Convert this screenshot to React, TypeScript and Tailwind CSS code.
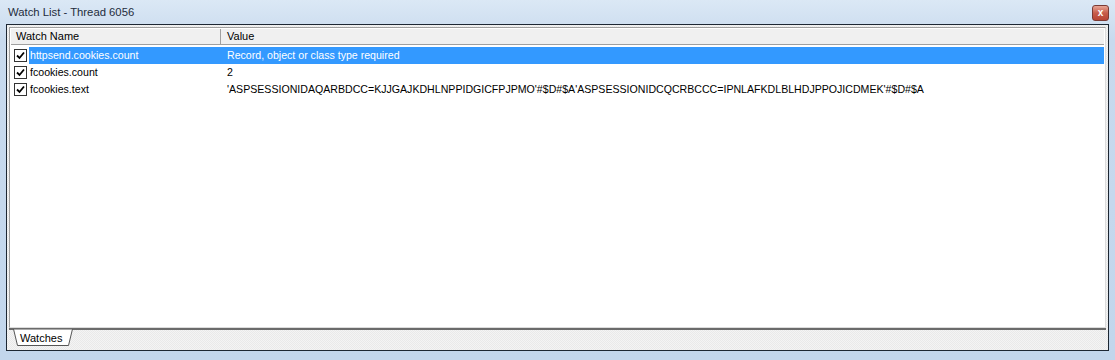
import React from "react";

const rows = [
  { name: "httpsend.cookies.count", value: "Record, object or class type required", selected: true },
  { name: "fcookies.count", value: "2", selected: false },
  {
    name: "fcookies.text",
    value:
      "'ASPSESSIONIDAQARBDCC=KJJGAJKDHLNPPIDGICFPJPMO'#$D#$A'ASPSESSIONIDCQCRBCCC=IPNLAFKDLBLHDJPPOJICDMEK'#$D#$A",
    selected: false,
  },
];

function CheckBox() {
  return (
    <div className="w-[13px] h-[13px] border border-[#333] bg-white flex items-center justify-center shrink-0">
      <svg width="9" height="9" viewBox="0 0 9 9">
        <path d="M1 4.5 L3.5 7 L8 1.5" fill="none" stroke="#000" strokeWidth="1.8" />
      </svg>
    </div>
  );
}

export default function App() {
  return (
    <div
      className="w-[1115px] h-[360px] flex flex-col bg-[linear-gradient(to_bottom,#dbe8f5,#c8daee_40px,#c2d6ec)] overflow-hidden"
      style={{ fontFamily: '"Liberation Sans", Arial, sans-serif' }}
    >
      {/* title bar */}
      <div className="h-[24px] flex items-center justify-between pl-[8px] pr-[6px] shrink-0">
        <span className="text-[11.3px] text-[#1e2c3c]">Watch List - Thread 6056</span>
        <div className="w-[17px] h-[16px] rounded-[3px] border border-[#7a3a34] bg-[linear-gradient(to_bottom,#e8a595,#c75d4b_50%,#b84434)] flex items-center justify-center mt-[2px]">
          <span className="text-white text-[10px] font-bold leading-none">x</span>
        </div>
      </div>

      {/* client area */}
      <div className="flex-1 mx-[6px] mb-[9px] border border-[#1d2733] flex flex-col bg-[#f0f0f0] bg-[repeating-conic-gradient(#f4f4f4_0%_25%,#e9e9e9_0%_50%)] bg-[length:2px_2px]">
        <div className="flex-1 mx-[2px] mt-[2px] border border-[#a0a0a0] border-r-[#dcdcdc] border-b-[#dcdcdc] bg-white flex flex-col text-[10.6px] text-black">
          {/* header */}
          <div className="h-[16px] flex bg-[#f0f0f0] border-b border-[#a0a0a0] shrink-0 mr-[1px] mt-[1px] ml-[1px] text-[11px]">
            <div className="w-[210px] pl-[5px] border-r border-[#a0a0a0] flex items-center">Watch Name</div>
            <div className="pl-[6px] flex items-center">Value</div>
          </div>
          <div className="h-[2px]" />
          {rows.map((r) => (
            <div key={r.name} className="h-[17px] flex items-center">
              <div className="pl-[4px] pr-[2px] flex items-center">
                <CheckBox />
              </div>
              <div
                className={`flex-1 h-full flex items-center mr-[1px] ${
                  r.selected ? "bg-[#3399ff] text-white" : ""
                }`}
              >
                <div className="w-[197px] pl-[1px] whitespace-nowrap">{r.name}</div>
                <div className="pl-[1px] whitespace-nowrap">{r.value}</div>
              </div>
            </div>
          ))}
        </div>
        {/* tab strip */}
        <div className="h-[22px] shrink-0 relative border-t-2 border-[#6b6b6b] mx-[2px]">
          <div className="absolute left-[4px] top-[-1px] h-[17px] w-[62px]">
            <svg width="62" height="17" viewBox="0 0 62 17" className="absolute inset-0">
              <path d="M0.5 0 L4.5 16.5 L55.5 16.5 L59.5 0 Z" fill="#fff" stroke="#555" />
            </svg>
            <span className="absolute left-[7px] top-[1px] text-[11px] text-black">Watches</span>
          </div>
        </div>
      </div>
    </div>
  );
}
